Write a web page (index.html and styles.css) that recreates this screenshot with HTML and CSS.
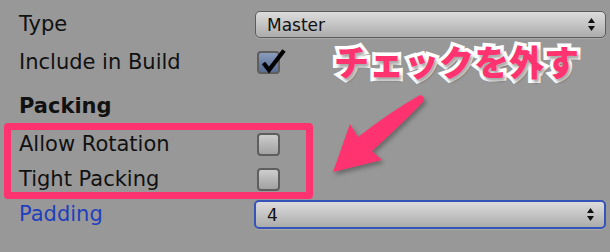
FILE: index.html
```html
<!DOCTYPE html>
<html lang="ja">
<head>
<meta charset="utf-8">
<title>Sprite Packer Inspector</title>
<link rel="stylesheet" href="styles.css">
</head>
<body>
<div class="inspector">
  <div class="row row-type">
    <span class="label">Type</span>
    <div class="popup">
      <span class="popup-text">Master</span>
      <svg class="popup-arrows" width="7" height="13" viewBox="0 0 7 13"><polygon points="0,5 3.5,0 7,5"/><polygon points="0,8 7,8 3.5,13"/></svg>
    </div>
  </div>
  <div class="row row-include">
    <span class="label">Include in Build</span>
    <span class="check checked">
      <svg class="tick" width="30" height="30" viewBox="0 0 30 30"><polyline points="4.5,14 10,21 25,1.5" /></svg>
    </span>
  </div>
  <div class="row row-head">
    <span class="label bold">Packing</span>
  </div>
  <div class="row row-allow">
    <span class="label">Allow Rotation</span>
    <span class="check"></span>
  </div>
  <div class="row row-tight">
    <span class="label">Tight Packing</span>
    <span class="check"></span>
  </div>
  <div class="row row-padding">
    <span class="label blue">Padding</span>
    <div class="popup focus">
      <span class="popup-text">4</span>
      <svg class="popup-arrows" width="7" height="13" viewBox="0 0 7 13"><polygon points="0,5 3.5,0 7,5"/><polygon points="0,8 7,8 3.5,13"/></svg>
    </div>
  </div>
</div>

<div class="highlight"></div>
<div class="callout">チェックを外す</div>
<svg class="arrow" width="610" height="252" viewBox="0 0 610 252">
  <path d="M 420 95 Q 390 112 358 137 L 350 124 L 333 172 L 382 160 L 372 151 Q 400 126 424 101 Q 425 96 420 95 Z"/>
</svg>
</body>
</html>
```

FILE: styles.css
```css
html, body {
  margin: 0;
  padding: 0;
}
body {
  width: 610px;
  height: 252px;
  overflow: hidden;
  position: relative;
  background: #989898;
  font-family: "DejaVu Sans", "Liberation Sans", sans-serif;
  color: #111;
}
.inspector {
  padding: 8px 4px 0 19px;
  display: grid;
  grid-template-columns: 236px 1fr;
  grid-template-rows: 33px 42px 43px 36px 35px 35px;
}
.row {
  display: contents;
}
.label {
  font-size: 21px;
  line-height: 1;
  align-self: center;
  white-space: nowrap;
}
.label.bold { font-weight: bold; }
.label.blue { color: #1e3fbd; }

.row-type .label, .row-type .popup { grid-row: 1; }
.row-include .label, .row-include .check { grid-row: 2; }
.row-head .label { grid-row: 3; padding-top: 3px; }
.row-allow .label, .row-allow .check { grid-row: 4; }
.row-tight .label, .row-tight .check { grid-row: 5; }
.row-padding .label, .row-padding .popup { grid-row: 6; }

.popup {
  align-self: center;
  height: 27px;
  box-sizing: border-box;
  border: 1.5px solid #5c5c5c;
  border-radius: 5px;
  background: linear-gradient(#dcdcdc, #c4c4c4 50%, #ababab);
  display: flex;
  align-items: center;
  justify-content: space-between;
  padding: 0 10px 0 11px;
  box-shadow: 0 1px 0 rgba(255,255,255,0.15);
}
.popup.focus {
  height: 29px;
  border: 2px solid #3553b8;
  margin-left: -1px;
}
.popup-text {
  font-size: 17px;
  color: #111;
}
.popup-arrows { fill: #111; }

.check {
  align-self: center;
  justify-self: start;
  margin-left: 2px;
  width: 23px;
  height: 23px;
  box-sizing: border-box;
  border: 2px solid #5e5e5e;
  border-radius: 4px;
  background: linear-gradient(#cdcdcd, #b4b4b4 55%, #a2a2a2);
  position: relative;
}
.check.checked {
  background: linear-gradient(#8a9dbd, #6c80a4 55%, #5b6f95);
}
.tick {
  position: absolute;
  left: 0;
  top: -4px;
  fill: none;
  stroke: #000;
  stroke-width: 4.2;
  stroke-linejoin: miter;
}

.highlight {
  position: absolute;
  left: 4px;
  top: 123px;
  width: 309px;
  height: 76px;
  box-sizing: border-box;
  border: 7px solid #fe3370;
  border-radius: 4px;
}
.callout {
  position: absolute;
  left: 334px;
  top: 36px;
  font-family: "Noto Sans CJK JP", sans-serif;
  font-weight: 900;
  font-size: 35px;
  line-height: 50px;
  letter-spacing: 0;
  color: #fe3370;
  -webkit-text-stroke: 7px #fff;
  paint-order: stroke fill;
  text-shadow: 2px 3px 3px rgba(0,0,0,0.35);
  white-space: nowrap;
}
.arrow {
  position: absolute;
  left: 0;
  top: 0;
  fill: #fe3370;
  filter: drop-shadow(2px 3px 2px rgba(0,0,0,0.3));
}
```
